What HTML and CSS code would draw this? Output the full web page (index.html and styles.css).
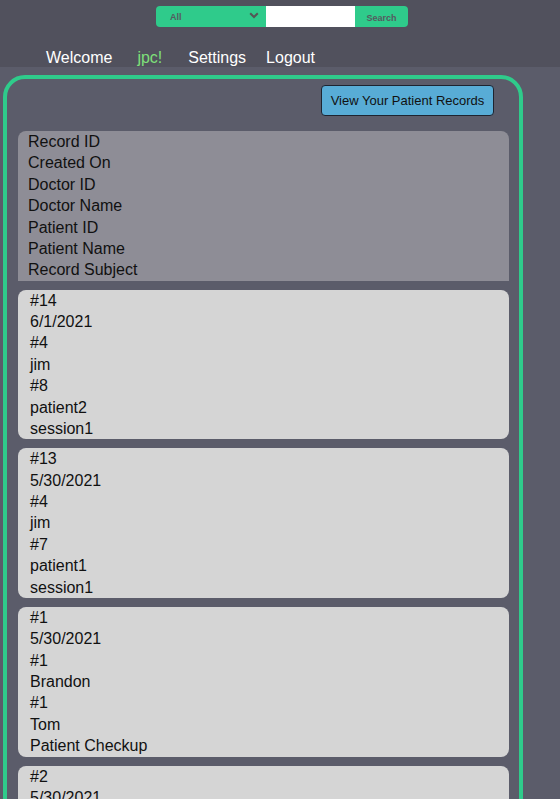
FILE: index.html
```html
<!DOCTYPE html>
<html>
<head>
<meta charset="utf-8">
<link rel="stylesheet" href="styles.css">
</head>
<body>
<header class="top">
  <div class="search">
    <div class="search-select">
      <span>All</span>
      <svg class="chev" width="10" height="7" viewBox="0 0 10 7"><path d="M1.2 1.2 L5 5 L8.8 1.2" fill="none" stroke="#555" stroke-width="2"/></svg>
    </div>
    <div class="search-input"></div>
    <div class="search-btn">Search</div>
  </div>
  <nav class="nav">
    <span class="welcome">Welcome</span>
    <span class="user">jpc!</span>
    <span class="link settings">Settings</span>
    <span class="link">Logout</span>
  </nav>
</header>
<main class="panel">
  <div class="actions">
    <button class="view-btn">View Your Patient Records</button>
  </div>
  <div class="list">
    <div class="card head">
      <div>Record ID</div><div>Created On</div><div>Doctor ID</div><div>Doctor Name</div><div>Patient ID</div><div>Patient Name</div><div>Record Subject</div>
    </div>
    <div class="card rec">
      <div>#14</div><div>6/1/2021</div><div>#4</div><div>jim</div><div>#8</div><div>patient2</div><div>session1</div>
    </div>
    <div class="card rec">
      <div>#13</div><div>5/30/2021</div><div>#4</div><div>jim</div><div>#7</div><div>patient1</div><div>session1</div>
    </div>
    <div class="card rec">
      <div>#1</div><div>5/30/2021</div><div>#1</div><div>Brandon</div><div>#1</div><div>Tom</div><div>Patient Checkup</div>
    </div>
    <div class="card rec">
      <div>#2</div><div>5/30/2021</div><div>#1</div><div>Brandon</div><div>#1</div><div>Tom</div><div>Patient Checkup</div>
    </div>
  </div>
</main>
</body>
</html>
```
FILE: styles.css
```css
html, body {
  margin: 0;
  padding: 0;
}
body {
  background: #5b5c6a;
  font-family: "Liberation Sans", Arial, sans-serif;
  color: #111;
}
.top {
  background: #51515d;
  height: 67px;
  display: flex;
  flex-direction: column;
}
.search {
  display: flex;
  margin: 6px 0 0 156px;
  width: 252px;
  height: 21px;
}
.search-select {
  width: 110px;
  background: #2fcb8b;
  border-radius: 4px 0 0 4px;
  display: flex;
  align-items: center;
  justify-content: space-between;
  padding: 0 7px 0 14px;
  box-sizing: border-box;
  font-size: 9px;
  font-weight: bold;
  color: #555a60;
}
.chev { margin-top: -2px; }
.search-input {
  width: 89px;
  background: #fff;
}
.search-btn {
  width: 53px;
  background: #2fcb8b;
  border-radius: 0 4px 4px 0;
  font-size: 9px;
  font-weight: bold;
  color: #555a60;
  display: flex;
  align-items: center;
  justify-content: center;
  padding-top: 2px;
  box-sizing: border-box;
}
.nav {
  display: flex;
  align-items: baseline;
  margin: 22px 0 0 46px;
  font-size: 16px;
  color: #fff;
}
.user {
  color: #7ee07a;
  margin-left: 25px;
}
.settings { margin-left: 26px; }
.link + .link { margin-left: 20px; }
.panel {
  margin: 8px 0 0 3px;
  width: 520px;
  box-sizing: border-box;
  border: 4px solid #2fcb8b;
  border-radius: 22px;
  padding: 6px 10px 20px 11px;
}
.actions {
  display: flex;
  justify-content: flex-end;
  padding-right: 15px;
}
.view-btn {
  font-family: "Liberation Sans", Arial, sans-serif;
  font-size: 13px;
  color: #111;
  background: #58acd6;
  border: 1px solid #1e2430;
  border-radius: 4px;
  width: 173px;
  height: 31px;
  padding: 0;
}
.list {
  margin-top: 15px;
  display: flex;
  flex-direction: column;
  gap: 9px;
}
.card {
  font-size: 16px;
  line-height: 21.38px;
}
.head {
  background: #8e8d96;
  border-radius: 8px 8px 0 0;
  padding-left: 10px;
}
.rec {
  background: #d5d5d5;
  border-radius: 8px;
  padding-left: 12px;
}
```
